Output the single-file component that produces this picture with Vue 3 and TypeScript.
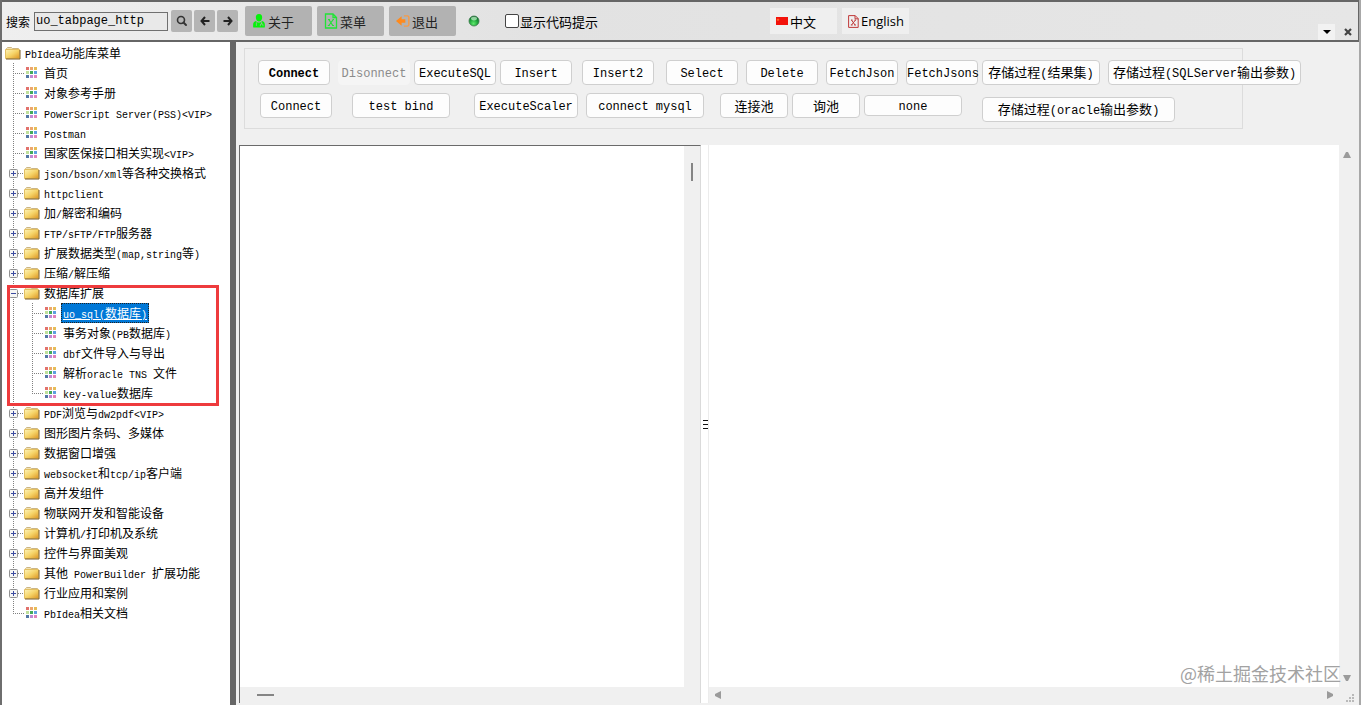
<script setup lang="ts">
import { ref } from 'vue'

interface TreeItem {
  label: string
  kind: 'leaf' | 'folder'
  children?: TreeItem[]
}

interface SqlButton {
  label: string
  size: string
  gap?: string
  strong?: boolean
  disabled?: boolean
}

interface Run {
  text: string
  latin: boolean
}

const leaf = (label: string): TreeItem => ({ label, kind: 'leaf' })
const folder = (label: string, children?: TreeItem[]): TreeItem => ({ label, kind: 'folder', children })

const search = ref('uo_tabpage_http')
const showTips = ref(false)
const selected = ref('uo_sql(数据库)')
const leftText = ref('')
const rightText = ref('')

const items: TreeItem[] = [
  leaf('首页'),
  leaf('对象参考手册'),
  leaf('PowerScript Server(PSS)<VIP>'),
  leaf('Postman'),
  leaf('国家医保接口相关实现<VIP>'),
  folder('json/bson/xml等各种交换格式'),
  folder('httpclient'),
  folder('加/解密和编码'),
  folder('FTP/sFTP/FTP服务器'),
  folder('扩展数据类型(map,string等)'),
  folder('压缩/解压缩'),
  folder('数据库扩展', [
    leaf('uo_sql(数据库)'),
    leaf('事务对象(PB数据库)'),
    leaf('dbf文件导入与导出'),
    leaf('解析oracle TNS 文件'),
    leaf('key-value数据库'),
  ]),
  folder('PDF浏览与dw2pdf<VIP>'),
  folder('图形图片条码、多媒体'),
  folder('数据窗口增强'),
  folder('websocket和tcp/ip客户端'),
  folder('高并发组件'),
  folder('物联网开发和智能设备'),
  folder('计算机/打印机及系统'),
  folder('控件与界面美观'),
  folder('其他 PowerBuilder 扩展功能'),
  folder('行业应用和案例'),
  leaf('PbIdea相关文档'),
]

const rowOne: SqlButton[] = [
  { label: 'Connect', size: 'w-m', strong: true },
  { label: 'Disonnect', size: 'w-m', gap: 'g-8', disabled: true },
  { label: 'ExecuteSQL', size: 'w-l', gap: 'g-4' },
  { label: 'Insert', size: 'w-m', gap: 'g-4' },
  { label: 'Insert2', size: 'w-m', gap: 'g-10' },
  { label: 'Select', size: 'w-m', gap: 'g-12' },
  { label: 'Delete', size: 'w-m', gap: 'g-8' },
  { label: 'FetchJson', size: 'w-m', gap: 'g-8' },
  { label: 'FetchJsons', size: 'w-m', gap: 'g-8' },
  { label: '存储过程(结果集)', size: 'w-118', gap: 'g-4' },
  { label: '存储过程(SQLServer输出参数)', size: 'w-xl', gap: 'g-8' },
]

const rowTwo: SqlButton[] = [
  { label: 'Connect', size: 'w-m' },
  { label: 'test bind', size: 'w-98', gap: 'g-20' },
  { label: 'ExecuteScaler', size: 'w-104', gap: 'g-24' },
  { label: 'connect mysql', size: 'w-118', gap: 'g-8' },
  { label: '连接池', size: 'w-s', gap: 'g-16' },
  { label: '询池', size: 'w-s', gap: 'g-4' },
  { label: 'none', size: 'w-98 short', gap: 'g-4' },
  { label: '存储过程(oracle输出参数)', size: 'w-xl low', gap: 'g-20' },
]

const gridColors = [
  '#e2726c', '#eda86c', '#e6bc58',
  '#bfe09a', '#45aa5a', '#5f9fe0',
  '#5277a4', '#c186d4', '#e283bb',
]

function runs(text: string): Run[] {
  return (text.match(/[\x20-\x7e]+|[^\x20-\x7e]+/g) ?? []).map((t) => ({
    text: t,
    latin: /^[\x20-\x7e]/.test(t),
  }))
}
</script>

<template>
  <div class="window">
    <svg class="defs" width="0" height="0" aria-hidden="true">
      <defs>
        <linearGradient id="folderFill" x1="0" y1="0" x2="1" y2="1">
          <stop offset="0" stop-color="#fdf3b8" />
          <stop offset="0.5" stop-color="#f6d468" />
          <stop offset="1" stop-color="#dc9422" />
        </linearGradient>
        <radialGradient id="orbFill" cx="0.45" cy="0.75" r="0.7">
          <stop offset="0" stop-color="#5fe86c" />
          <stop offset="0.6" stop-color="#1ea53a" />
          <stop offset="1" stop-color="#0c6a2c" />
        </radialGradient>
        <symbol id="folder" viewBox="0 0 16 14">
          <path d="M1.500 4V2.500l1-1h4l1 1h6V4" fill="#f0e2b4" stroke="#cdb684" />
          <path d="M.5 3.500h14v9H.5z" fill="url(#folderFill)" stroke="#e3bf62" />
          <path d="M1 13h14V4" fill="none" stroke="#7a5a24" />
        </symbol>
        <symbol id="tiles" viewBox="0 0 12 12">
          <rect
            v-for="(c, i) in gridColors"
            :key="i"
            :x="(i % 3) * 4"
            :y="Math.floor(i / 3) * 4"
            width="3"
            height="3"
            :fill="c"
          />
        </symbol>
      </defs>
    </svg>

    <header class="toolbar">
      <label class="search-label" for="search">搜索</label>
      <input id="search" v-model="search" class="search" type="text" spellcheck="false" />
      <div class="mini-group">
        <button class="mini" type="button" aria-label="搜索">
          <svg width="12" height="12" viewBox="0 0 12 12">
            <circle cx="5" cy="5" r="3.500" fill="none" stroke="#333" stroke-width="1.600" />
            <path d="M7.500 7.500 10 10" stroke="#333" stroke-width="2" stroke-linecap="round" />
          </svg>
        </button>
        <button class="mini" type="button" aria-label="上一个">
          <svg width="12" height="12" viewBox="0 0 12 12">
            <path d="M6 2 2.500 6 6 10M3 6h7.500" fill="none" stroke="#222" stroke-width="2" />
          </svg>
        </button>
        <button class="mini" type="button" aria-label="下一个">
          <svg width="12" height="12" viewBox="0 0 12 12">
            <path d="M6 2 9.500 6 6 10M9 6H1.500" fill="none" stroke="#222" stroke-width="2" />
          </svg>
        </button>
      </div>
      <div class="big-group">
        <button class="big" type="button">
          <svg width="14" height="16" viewBox="0 0 16 16">
            <path d="M8 0c2.600 0 3.800 1.800 3.600 4.200C11.400 6.600 10 8.500 8 8.500S4.600 6.600 4.400 4.200C4.200 1.800 5.400 0 8 0z" fill="#06f20b" />
            <path d="M4.500 8c1 1.200 2 1.800 3.500 1.800S10.500 9.200 11.500 8c2 .5 3.200 2 3.200 4v2.500c0 .8-.5 1-1.200 1h-11c-.7 0-1.200-.3-1.200-1V12c0-2 1.200-3.500 3.200-4z" fill="#06f20b" />
            <path d="M5 9.500v4M11 9v3M9.500 14v-1.500c0-2 3-2 3 0V14" fill="none" stroke="#b2b2b2" stroke-width="0.800" />
          </svg>
          <span>关于</span>
        </button>
        <button class="big" type="button">
          <svg width="14" height="16" viewBox="0 0 14 16">
            <path d="M1.500 1h7.500l3.500 3.500V15h-11zM9 1v3.500h3.500" fill="none" stroke="#21e436" stroke-width="1.300" />
            <path d="M4 6.500h2M8.500 6.500h1.500M4.800 6.500l4 6M9.300 6.500l-4.500 6M3.800 12.500h2M8 12.500h2" fill="none" stroke="#21e436" stroke-width="1.200" />
          </svg>
          <span>菜单</span>
        </button>
        <button class="big" type="button">
          <svg width="14" height="14" viewBox="0 0 15 14">
            <path d="M0 7l6-5v3h4v4H6v3z" fill="#ff8a1c" />
            <path d="M8.500 1.500h3.500c1 0 1.800.7 1.800 1.700v7.600c0 1-.8 1.700-1.800 1.700H8.500" fill="none" stroke="#f79a45" stroke-width="1.500" />
          </svg>
          <span>退出</span>
        </button>
      </div>
      <svg class="orb" width="12" height="12" viewBox="0 0 12 12">
        <circle cx="6" cy="6" r="5" fill="url(#orbFill)" stroke="#3d7a4c" stroke-width="0.800" />
        <ellipse cx="6" cy="3.600" rx="3" ry="1.800" fill="#c6f0cc" opacity="0.7" />
      </svg>
      <label class="tips">
        <input v-model="showTips" type="checkbox" />
        <span>显示代码提示</span>
      </label>
      <div class="lang-group">
        <button class="lang" type="button">
          <svg width="12" height="8" viewBox="0 0 12 8">
            <rect width="12" height="8" fill="#f3120b" />
            <path d="M2 1l.4 1.200h1.200l-1 .7.4 1.200-1-.7-1 .7.4-1.200-1-.7h1.200z" fill="#ff7a2e" />
          </svg>
          <span>中文</span>
        </button>
        <button class="lang" type="button">
          <svg width="11" height="13" viewBox="0 0 11 13">
            <path d="M.6.6h6.600l3 3v8.800H.6zM7 .6v3.200h3.200" fill="none" stroke="#c03a3a" />
            <path d="M3 5h1.500M6.500 5H8M3.500 5l3.500 5M7.500 5l-4 5M2.800 10h1.800M6.200 10H8" fill="none" stroke="#c03a3a" />
          </svg>
          <span class="english">English</span>
        </button>
      </div>
      <div class="corner">
        <button class="corner-btn lit" type="button" aria-label="展开">
          <svg width="8" height="4" viewBox="0 0 8 4"><path d="M0 0h8L4 4z" fill="#000" /></svg>
        </button>
        <button class="corner-btn" type="button" aria-label="关闭">
          <svg width="8" height="8" viewBox="0 0 8 8"><path d="M1 1l6 6M7 1 1 7" stroke="#444" stroke-width="2.200" /></svg>
        </button>
      </div>
    </header>

    <div class="body">
      <nav class="tree">
        <a class="row root" href="#">
          <svg class="icon" width="16" height="14"><use href="#folder" /></svg>
          <span class="caption"><span v-for="(r, i) in runs('PbIdea功能库菜单')" :key="i" :class="{ latin: r.latin }">{{ r.text }}</span></span>
        </a>
        <ul>
          <li v-for="item in items" :key="item.label" :class="{ marked: item.children }">
            <a class="row" href="#">
              <span class="branch">
                <svg v-if="item.kind === 'folder'" class="toggle" width="9" height="9" viewBox="0 0 9 9">
                  <rect x="0.500" y="0.500" width="8" height="8" rx="1" fill="#f6f6f4" stroke="#919191" />
                  <path :d="item.children ? 'M2 4.500h5' : 'M2 4.500h5M4.500 2v5'" stroke="#3c4ba0" />
                </svg>
              </span>
              <svg v-if="item.kind === 'folder'" class="icon" width="16" height="14"><use href="#folder" /></svg>
              <svg v-else class="icon" width="16" height="12"><use href="#tiles" /></svg>
              <span class="caption"><span v-for="(r, i) in runs(item.label)" :key="i" :class="{ latin: r.latin }">{{ r.text }}</span></span>
            </a>
            <ul v-if="item.children" class="nested">
              <li v-for="child in item.children" :key="child.label">
                <a class="row" href="#" :class="{ selected: selected === child.label }" @click.prevent="selected = child.label">
                  <span class="branch"></span>
                  <svg class="icon" width="16" height="12"><use href="#tiles" /></svg>
                  <span class="caption"><span v-for="(r, i) in runs(child.label)" :key="i" :class="{ latin: r.latin }">{{ r.text }}</span></span>
                </a>
              </li>
            </ul>
          </li>
        </ul>
      </nav>
      <div class="splitter"></div>

      <main class="work">
        <fieldset class="actions">
          <div class="line">
            <button v-for="b in rowOne" :key="b.label" type="button" class="sql" :class="[b.size, b.gap, { strong: b.strong }]" :disabled="b.disabled"><span v-for="(r, i) in runs(b.label)" :key="i" :class="{ latin: r.latin }">{{ r.text }}</span></button>
          </div>
          <div class="line second">
            <button v-for="b in rowTwo" :key="b.label" type="button" class="sql" :class="[b.size, b.gap]"><span v-for="(r, i) in runs(b.label)" :key="i" :class="{ latin: r.latin }">{{ r.text }}</span></button>
          </div>
        </fieldset>

        <div class="panes">
          <section class="pane left">
            <textarea v-model="leftText" class="editor" aria-label="SQL"></textarea>
            <div class="vbar"><span class="vthumb"></span></div>
            <div class="hbar"><span class="hthumb"></span></div>
          </section>
          <div class="handle">
            <svg width="5" height="10" viewBox="0 0 5 10"><path d="M0 1.500h5M0 5.500h5M0 9.500h5" stroke="#111" /></svg>
          </div>
          <section class="pane right">
            <textarea v-model="rightText" class="editor" aria-label="结果"></textarea>
            <div class="vbar arrows">
              <svg width="8" height="6" viewBox="0 0 8 6"><path d="M0 6h8L5 0H3z" fill="#9b9b9b" /></svg>
              <svg width="8" height="6" viewBox="0 0 8 6"><path d="M0 0h8L5 6H3z" fill="#9b9b9b" /></svg>
            </div>
            <div class="hbar arrows">
              <svg width="6" height="8" viewBox="0 0 6 8"><path d="M6 0v8L0 5V3z" fill="#9b9b9b" /></svg>
              <svg width="6" height="8" viewBox="0 0 6 8"><path d="M0 0v8l6-3V3z" fill="#9b9b9b" /></svg>
            </div>
            <div class="grip">
              <svg width="9" height="9" viewBox="0 0 9 9"><path d="M6 0h2v2H6zM3 3h2v2H3zM6 3h2v2H6zM0 6h2v2H0zM3 6h2v2H3zM6 6h2v2H6z" fill="#b9b9b9" /></svg>
            </div>
            <div class="watermark">@稀土掘金技术社区</div>
          </section>
        </div>
      </main>
    </div>
  </div>
</template>

<style>
body {
  margin: 0;
  background: #f0f0f0;
}
</style>

<style scoped>
.window {
  box-sizing: border-box;
  height: 100vh;
  display: flex;
  flex-direction: column;
  border-left: 2px solid #6e6e6e;
  border-right: 2px solid #a8a8a8;
  background: #f0f0f0;
  color: #000;
  font-family: "Liberation Mono", "Noto Sans CJK SC", monospace;
  font-size: 12px;
}
.defs {
  position: absolute;
}
button {
  font: inherit;
  color: inherit;
  padding: 0;
  margin: 0;
  border: 0;
}
.toolbar {
  box-sizing: border-box;
  height: 42px;
  flex: none;
  display: flex;
  align-items: center;
  background: linear-gradient(90deg, #efefef, #e2e2e2 40%, #e6e6e6);
  border-top: 2px solid #666;
  border-bottom: 2px solid #666;
  border-right: 1px solid #666;
  font-family: "Noto Sans CJK SC", sans-serif;
  font-size: 13px;
  padding-left: 4px;
}
.search-label {
  font-size: 12px;
  width: 28px;
}
.search {
  box-sizing: border-box;
  width: 134px;
  height: 19px;
  padding: 0 1px;
  border: 1px solid #707070;
  background: #e9e9e9;
  font: 12px "Liberation Mono", monospace;
}
.mini-group {
  display: flex;
  gap: 2px;
  margin-left: 3px;
}
.mini {
  width: 21px;
  height: 22px;
  display: grid;
  place-items: center;
  background: #b5b5b5;
  border-radius: 2px;
}
.big-group {
  display: flex;
  gap: 5px;
  margin-left: 7px;
}
.big {
  width: 67px;
  height: 30px;
  display: flex;
  align-items: center;
  gap: 2px;
  padding-left: 7px;
  background: #b2b2b2;
  border-radius: 2px;
  color: #222;
}
.orb {
  margin-left: 12px;
}
.tips {
  display: flex;
  align-items: center;
  gap: 1px;
  margin-left: 25px;
}
.tips input {
  appearance: none;
  width: 14px;
  height: 14px;
  margin: 0;
  border: 1px solid #444;
  border-radius: 2px;
  background: #fff;
}
.lang-group {
  display: flex;
  gap: 5px;
  margin-left: 172px;
}
.lang {
  width: 67px;
  height: 26px;
  display: flex;
  align-items: center;
  gap: 2px;
  padding-left: 6px;
  background: #efefef;
}
.english {
  font-family: "Open Sans", "Noto Sans", sans-serif;
}
.corner {
  display: flex;
  align-self: flex-end;
  gap: 4px;
  margin-left: auto;
  padding-right: 2px;
}
.corner-btn {
  width: 17px;
  height: 16px;
  display: grid;
  place-items: center;
  background: transparent;
}
.corner-btn.lit {
  background: #f2f2f2;
}
.body {
  flex: 1;
  min-height: 0;
  display: flex;
}
.tree {
  width: 228px;
  flex: none;
  box-sizing: border-box;
  padding-top: 1px;
  background: #fff;
}
.tree ul {
  list-style: none;
  margin: 0;
  padding: 0;
}
.tree li {
  position: relative;
}
.tree .nested {
  padding-left: 19px;
}
.tree li::before {
  content: "";
  position: absolute;
  left: 11px;
  top: 0;
  bottom: 0;
  width: 1px;
  background: repeating-linear-gradient(#808080 0 1px, transparent 1px 2px);
}
.tree li:last-child::before {
  bottom: 10px;
}
.tree li.marked::after {
  content: "";
  position: absolute;
  left: 5px;
  right: 11px;
  top: 2px;
  bottom: -3px;
  border: 3px solid #ee3b3d;
  pointer-events: none;
  z-index: 1;
}
.row {
  height: 20px;
  display: flex;
  align-items: center;
  color: #000;
  text-decoration: none;
  white-space: pre;
}
.row.root {
  padding-left: 3px;
}
.branch {
  box-sizing: border-box;
  position: relative;
  width: 22px;
  height: 20px;
  padding-left: 7px;
  flex: none;
  display: flex;
  align-items: center;
}
.branch::after {
  content: "";
  flex: 1;
  height: 1px;
  background: repeating-linear-gradient(90deg, #808080 0 1px, transparent 1px 2px);
}
.branch:empty {
  padding-left: 11px;
}
.toggle {
  flex: none;
}
.icon {
  flex: none;
}
.caption {
  height: 20px;
  line-height: 20px;
  padding: 0 2px;
  margin-left: 2px;
  font-family: "Noto Sans CJK SC", sans-serif;
}
.caption .latin {
  font-family: "Liberation Mono", monospace;
  font-size: 10px;
}
.selected .caption {
  background: #0078d7;
  color: #fff;
  outline: 1px dotted #222;
  outline-offset: -1px;
  text-decoration: underline;
}
.splitter {
  width: 6px;
  flex: none;
  background: #666;
}
.work {
  flex: 1;
  min-width: 0;
  display: flex;
  flex-direction: column;
}
.actions {
  box-sizing: border-box;
  height: 81px;
  flex: none;
  min-width: 0;
  margin: 6px 116px 16px 8px;
  padding: 11px 0 0 13px;
  border: 1px solid #dcdcdc;
}
.line {
  display: flex;
  align-items: flex-start;
}
.line.second {
  margin-top: 8px;
  padding-left: 2px;
}
.sql {
  box-sizing: border-box;
  height: 25px;
  flex: none;
  border: 1px solid #cfcfcf;
  border-radius: 4px;
  background: #fdfdfd;
  font-family: "Noto Sans CJK SC", sans-serif;
  font-size: 13px;
  line-height: 20px;
  white-space: pre;
}
.sql .latin {
  font-family: "Liberation Mono", monospace;
  font-size: 12px;
}
.sql:disabled {
  border-color: #f5f5f5;
  background: #f5f5f5;
  color: #8b8b8b;
}
.strong {
  font-weight: bold;
}
.short {
  height: 21px;
  line-height: 16px;
  margin-top: 2px;
}
.low {
  margin-top: 4px;
}
.w-s { width: 68px; }
.w-m { width: 72px; }
.w-l { width: 82px; }
.w-98 { width: 98px; }
.w-104 { width: 104px; }
.w-118 { width: 118px; }
.w-xl { width: 193px; }
.g-4 { margin-left: 4px; }
.g-8 { margin-left: 8px; }
.g-10 { margin-left: 10px; }
.g-12 { margin-left: 12px; }
.g-16 { margin-left: 16px; }
.g-20 { margin-left: 20px; }
.g-24 { margin-left: 24px; }
.panes {
  flex: 1;
  min-height: 0;
  display: grid;
  grid-template-columns: 462fr 8px 646fr;
  padding: 0 4px 2px 3px;
}
.pane {
  position: relative;
  min-width: 0;
  display: grid;
  grid-template-columns: 1fr 16px;
  grid-template-rows: 1fr 16px;
  background: #f0f0f0;
}
.pane.left {
  border-top: 1px solid #6a6a6a;
  border-left: 1px solid #6a6a6a;
  border-right: 1px solid #dadada;
}
.editor {
  box-sizing: border-box;
  width: 100%;
  height: 100%;
  border: 0;
  padding: 4px;
  resize: none;
  outline: 0;
  background: #fff;
  font: inherit;
}
.vbar {
  display: flex;
  flex-direction: column;
  align-items: center;
}
.hbar {
  display: flex;
  align-items: center;
}
.vthumb {
  width: 2px;
  height: 18px;
  margin-top: 17px;
  background: #858585;
}
.hthumb {
  width: 17px;
  height: 2px;
  margin-left: 17px;
  background: #858585;
}
.arrows {
  justify-content: space-between;
  padding: 7px 0 6px;
}
.hbar.arrows {
  padding: 0 6px;
}
.grip {
  display: grid;
  place-items: end;
}
.handle {
  display: grid;
  place-items: center end;
  background: #fff;
  border-right: 1px solid #ececec;
}
.watermark {
  position: absolute;
  right: 14px;
  bottom: 16px;
  font: 18px/28px "Noto Sans CJK SC", sans-serif;
  color: #a2a2a2;
  white-space: nowrap;
  pointer-events: none;
}
</style>
